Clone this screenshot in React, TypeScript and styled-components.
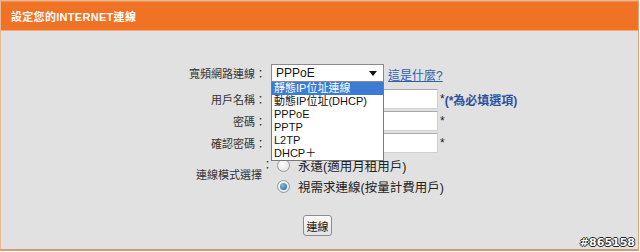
import styled, { createGlobalStyle, css } from 'styled-components';

const GlobalStyle = createGlobalStyle`
  body {
    margin: 0;
    background: #fff;
    font-family: 'Liberation Sans', 'Noto Sans CJK TC', sans-serif;
  }
`;

const FONT = `'Liberation Sans', 'Noto Sans CJK TC', sans-serif`;

const options = ['靜態IP位址連線', '動態IP位址(DHCP)', 'PPPoE', 'PPTP', 'L2TP', 'DHCP＋'];

export default function App() {
  return (
    <>
      <GlobalStyle />
      <Frame>
        <Header>設定您的INTERNET連線</Header>
        <Body>
          <Row height={18}>
            <Label>寬頻網路連線：</Label>
            <SelectWrap>
              <SelectBox>
                <span>PPPoE</span>
                <Arrow />
              </SelectBox>
              <OptionList>
                {options.map((o, i) => (
                  <OptionItem key={o} active={i === 0}>
                    {o}
                  </OptionItem>
                ))}
              </OptionList>
            </SelectWrap>
            <HelpLink>這是什麼?</HelpLink>
          </Row>
          <Row height={20} top={7}>
            <Label>用戶名稱：</Label>
            <TextInput />
            <Star>*</Star>
            <Required>(*為必填選項)</Required>
          </Row>
          <Row height={20} top={2}>
            <Label>密碼：</Label>
            <TextInput />
            <Star>*</Star>
          </Row>
          <Row height={20} top={2}>
            <Label>確認密碼：</Label>
            <TextInput />
            <Star>*</Star>
          </Row>
          <ModeRow>
            <ModeLabel>
              連線模式選擇<Colon>：</Colon>
            </ModeLabel>
            <RadioGroup>
              <RadioRow>
                <Radio />
                <RadioText>永遠(適用月租用戶)</RadioText>
              </RadioRow>
              <RadioRow>
                <Radio checked />
                <RadioText>視需求連線(按量計費用戶)</RadioText>
              </RadioRow>
            </RadioGroup>
          </ModeRow>
          <ButtonRow>
            <ConnectButton>連線</ConnectButton>
          </ButtonRow>
        </Body>
        <Watermark>#865158</Watermark>
      </Frame>
    </>
  );
}

const Frame = styled.div`
  position: relative;
  display: flex;
  flex-direction: column;
  width: 639px;
  height: 251px;
  box-sizing: border-box;
  border: 1px solid #e9b691;
  border-bottom: 2px solid #d49a73;
  border-right: 1px solid #d7a27e;
`;

const Header = styled.div`
  display: flex;
  align-items: center;
  height: 28px;
  padding-left: 10px;
  background: #f07225;
  border-top: 1px solid #f29055;
  border-bottom: 1px solid #f5a777;
  color: #fff;
  font-family: ${FONT};
  font-size: 11px;
  font-weight: bold;
  letter-spacing: 0.3px;
`;

const Body = styled.div`
  flex: 1;
  display: flex;
  flex-direction: column;
  padding-top: 33px;
  background: #e1e1e1;
`;

const Row = styled.div<{ height: number; top?: number }>`
  display: flex;
  align-items: center;
  height: ${({ height }) => height}px;
  margin-top: ${({ top = 0 }) => top}px;
`;

const Label = styled.div`
  width: 270px;
  flex: none;
  padding-right: 5px;
  box-sizing: border-box;
  text-align: right;
  color: #333;
  font-family: ${FONT};
  font-size: 11px;
`;

const SelectWrap = styled.div`
  position: relative;
  z-index: 2;
`;

const SelectBox = styled.div`
  display: flex;
  align-items: center;
  justify-content: space-between;
  width: 113px;
  height: 18px;
  padding: 0 6px 0 4px;
  box-sizing: border-box;
  background: #fff;
  border: 1px solid #8a8a8a;
  color: #111;
  font-family: ${FONT};
  font-size: 12px;
`;

const Arrow = styled.span`
  width: 0;
  height: 0;
  border-left: 4px solid transparent;
  border-right: 4px solid transparent;
  border-top: 5px solid #111;
`;

const OptionList = styled.div`
  position: absolute;
  top: 18px;
  left: 0;
  width: 113px;
  box-sizing: border-box;
  background: #fff;
  border: 1px solid #7a7a7a;
  border-top: none;
`;

const OptionItem = styled.div<{ active?: boolean }>`
  height: 13px;
  line-height: 13px;
  padding-left: 2px;
  color: #111;
  font-family: ${FONT};
  font-size: 11px;
  white-space: nowrap;

  ${({ active }) =>
    active &&
    css`
      background: #3d7bd3;
      color: #fff;
    `}
`;

const HelpLink = styled.a`
  margin-left: 4px;
  color: #2d5fae;
  text-decoration: underline;
  font-family: ${FONT};
  font-size: 12px;
  position: relative;
  top: 1px;
`;

const TextInput = styled.div`
  width: 167px;
  height: 20px;
  box-sizing: border-box;
  background: #fff;
  border: 1px solid #a9a9a9;
  border-right-color: #d0d0d0;
  border-bottom-color: #d0d0d0;
`;

const Star = styled.span`
  margin-left: 2px;
  color: #222;
  font-family: ${FONT};
  font-size: 12px;
`;

const Required = styled.span`
  color: #2f4fa0;
  font-family: ${FONT};
  font-size: 12px;
  font-weight: bold;
`;

const ModeRow = styled.div`
  display: flex;
  align-items: center;
  margin-top: 3px;
`;

const ModeLabel = styled(Label)`
  display: flex;
  justify-content: flex-end;
  align-items: center;
  height: 40px;
  padding-right: 0;
  padding-bottom: 4px;
`;

const Colon = styled.span`
  align-self: flex-start;
  margin-top: 0;
  width: 9px;
`;

const RadioGroup = styled.div`
  display: flex;
  flex-direction: column;
  gap: 5px;
  padding-left: 6px;
`;

const RadioRow = styled.div`
  display: flex;
  align-items: center;
  height: 16px;
  gap: 8px;
`;

const Radio = styled.span<{ checked?: boolean }>`
  position: relative;
  width: 13px;
  height: 13px;
  box-sizing: border-box;
  border-radius: 50%;
  border: 1px solid #9a9a9a;
  background: radial-gradient(circle at 40% 35%, #ffffff, #dcdcdc);

  ${({ checked }) =>
    checked &&
    css`
      &::after {
        content: '';
        position: absolute;
        left: 2px;
        top: 2px;
        width: 7px;
        height: 7px;
        border-radius: 50%;
        background: radial-gradient(circle at 40% 35%, #7fc0e8, #1d5f92);
      }
    `}
`;

const RadioText = styled.span`
  color: #222;
  font-family: ${FONT};
  font-size: 12.5px;
`;

const ButtonRow = styled.div`
  display: flex;
  justify-content: center;
  margin-top: 19px;
  padding-right: 4px;
`;

const ConnectButton = styled.button`
  width: 29px;
  height: 21px;
  padding: 0;
  box-sizing: border-box;
  border: 1px solid #8c8c8c;
  border-radius: 3px;
  background: linear-gradient(#fbfbfb, #e2e2e2);
  color: #111;
  font-family: ${FONT};
  font-size: 11px;
`;

const Watermark = styled.div`
  position: absolute;
  right: 3px;
  bottom: 0;
  color: #fff;
  font-family: 'DejaVu Sans', sans-serif;
  font-size: 11px;
  font-weight: bold;
  text-shadow:
    -1px 0 #222,
    1px 0 #222,
    0 -1px #222,
    0 1px #222;
`;
